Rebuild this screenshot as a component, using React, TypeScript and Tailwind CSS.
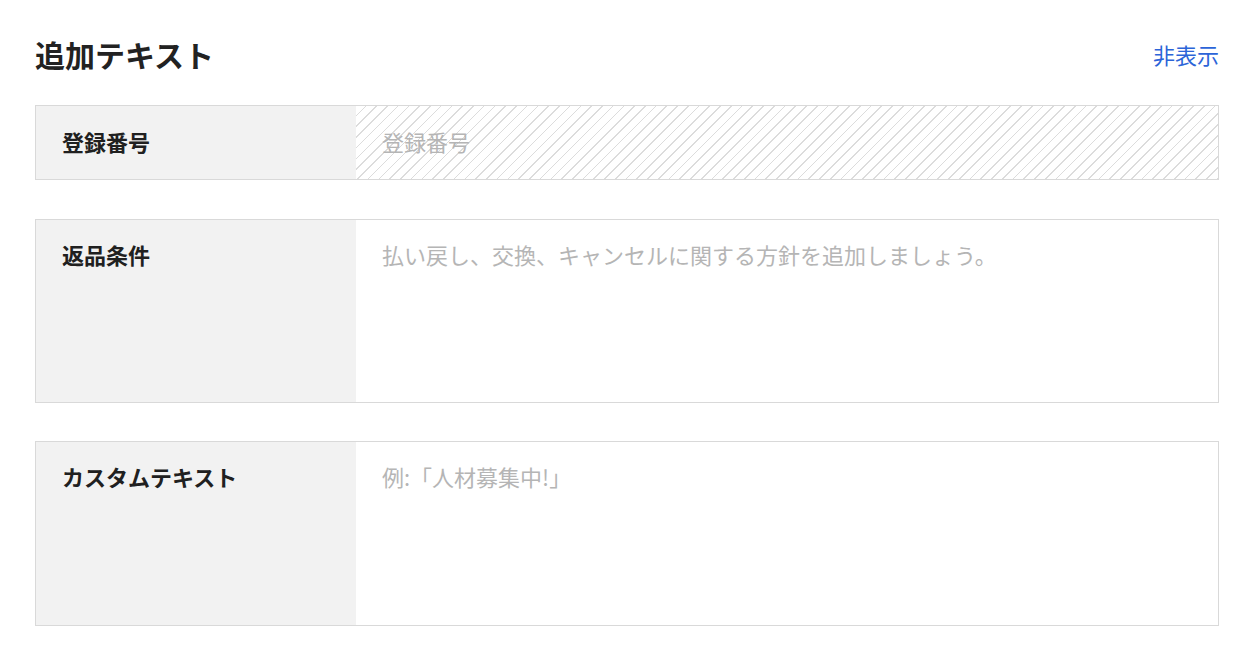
const fontStack = "font-['Noto_Sans_CJK_JP','Noto_Sans',sans-serif]";

interface FieldRowProps {
  label: string;
  placeholder: string;
  tall?: boolean;
  disabled?: boolean;
  className?: string;
}

function FieldRow({ label, placeholder, tall, disabled, className = "" }: FieldRowProps) {
  return (
    <div
      className={`flex border border-[#d9d9d9] ${tall ? "h-[184px]" : "h-[75px]"} ${className}`}
    >
      <div
        className={`flex w-[320px] shrink-0 bg-[#f2f2f2] px-[26px] ${
          tall ? "items-start pt-[18px]" : "items-center pb-[4px]"
        }`}
      >
        <span className="text-[22px] leading-[32px] font-bold text-[#202020]">
          {label}
        </span>
      </div>
      <div
        className={`flex flex-1 px-[26px] ${
          tall ? "items-start pt-[18px]" : "items-center pb-[4px]"
        } ${
          disabled
            ? "bg-[repeating-linear-gradient(135deg,transparent_0,transparent_6.4px,#dcdcdc_6.4px,#dcdcdc_7.6px)]"
            : "bg-white"
        }`}
      >
        <span className="text-[22px] leading-[32px] text-[#b5b5b5]">
          {placeholder}
        </span>
      </div>
    </div>
  );
}

export default function App() {
  return (
    <div className={`min-h-[650px] bg-white pl-[35px] pr-[29px] pt-[34px] ${fontStack} antialiased`}>
      <div className="flex items-center justify-between">
        <h1 className="text-[30px] leading-[40px] font-bold text-[#222]">
          追加テキスト
        </h1>
        <button className="text-[22px] leading-[32px] text-[#2c64d8]">
          非表示
        </button>
      </div>

      <div className="mt-[31px] flex flex-col">
        <FieldRow label="登録番号" placeholder="登録番号" disabled />
        <FieldRow
          className="mt-[39px]"
          label="返品条件"
          placeholder="払い戻し、交換、キャンセルに関する方針を追加しましょう。"
          tall
        />
        <FieldRow
          className="mt-[38px] h-[185px]"
          label="カスタムテキスト"
          placeholder="例:「人材募集中!」"
          tall
        />
      </div>
    </div>
  );
}
